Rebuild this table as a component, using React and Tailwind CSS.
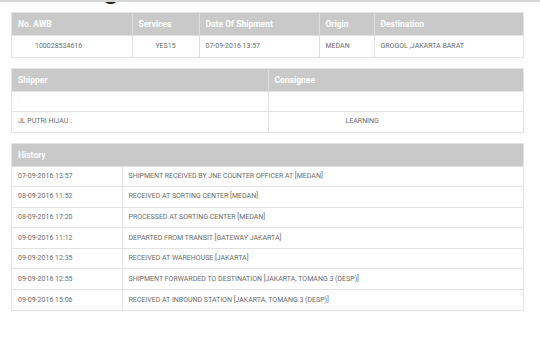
const HISTORY = [
  ['07-09-2016 13:57', 'SHIPMENT RECEIVED BY JNE COUNTER OFFICER AT [MEDAN]'],
  ['08-09-2016 11:52', 'RECEIVED AT SORTING CENTER [MEDAN]'],
  ['08-09-2016 17:20', 'PROCESSED AT SORTING CENTER [MEDAN]'],
  ['09-09-2016 11:12', 'DEPARTED FROM TRANSIT [GATEWAY JAKARTA]'],
  ['09-09-2016 12:35', 'RECEIVED AT WAREHOUSE [JAKARTA]'],
  ['09-09-2016 12:55', 'SHIPMENT FORWARDED TO DESTINATION [JAKARTA, TOMANG 3 (DESP)]'],
  ['09-09-2016 15:06', 'RECEIVED AT INBOUND STATION [JAKARTA, TOMANG 3 (DESP)]'],
];

const th = 'p-0 px-[6px] text-left align-middle font-bold leading-none text-white text-[8.5px] border-r border-[#dedede] last:border-r-0';
const td = 'p-0 px-[6px] align-middle leading-none text-[7px] text-[#6b6b6b] border-r border-t border-[#e2e2e2] last:border-r-0';

function Card({ children }) {
  return (
    <div className="w-[511px] outline outline-1 outline-[#e3e3e3] shadow-[0_1px_1px_rgba(0,0,0,0.05)]">
      {children}
    </div>
  );
}

export default function App() {
  return (
    <div className="w-[540px] h-[342px] bg-white overflow-hidden" style={{ fontFamily: 'Roboto, "Liberation Sans", sans-serif' }}>
      <div className="h-[5px] overflow-hidden border-t-2 border-[#d6d6d6]">
        <h1
          className="ml-3 -mt-[25px] text-[26px] leading-none font-bold text-[#222] whitespace-nowrap"
          style={{ fontFamily: '"Liberation Sans", Arial, sans-serif' }}
        >
          Tracking
        </h1>
      </div>

      <div className="ml-3 mt-2 flex flex-col gap-3">
        <Card>
          <table className="w-full border-collapse table-fixed">
            <colgroup>
              <col className="w-[120px]" />
              <col className="w-[67px]" />
              <col className="w-[120px]" />
              <col className="w-[55px]" />
              <col />
            </colgroup>
            <thead>
              <tr className="bg-[#c9c9c9] h-[22px]">
                <th className={th}>No. AWB</th>
                <th className={`${th} text-center`}>Services</th>
                <th className={th}>Date Of Shipment</th>
                <th className={th}>Origin</th>
                <th className={th}>Destination</th>
              </tr>
            </thead>
            <tbody>
              <tr className="h-[22px]">
                <td className={`${td} pl-[23px]`}>100028534616</td>
                <td className={`${td} text-center`}>YES15</td>
                <td className={td}>07-09-2016 13:57</td>
                <td className={td}>MEDAN</td>
                <td className={td}>GROGOL ,JAKARTA BARAT</td>
              </tr>
            </tbody>
          </table>
        </Card>

        <Card>
          <table className="w-full border-collapse table-fixed">
            <colgroup>
              <col className="w-[256px]" />
              <col />
            </colgroup>
            <thead>
              <tr className="bg-[#c9c9c9] h-[22px]">
                <th className={th}>Shipper</th>
                <th className={th}>Consignee</th>
              </tr>
            </thead>
            <tbody>
              <tr className="h-[20px]">
                <td className={`${td} text-[#e4e4e4]`}>:</td>
                <td className={td}></td>
              </tr>
              <tr className="h-[21px]">
                <td className={td}>JL PUTRI HIJAU :</td>
                <td className={`${td} pl-[77px]`}>LEARNING</td>
              </tr>
            </tbody>
          </table>
        </Card>

        <Card>
          <table className="w-full border-collapse table-fixed">
            <colgroup>
              <col className="w-[110px]" />
              <col />
            </colgroup>
            <thead>
              <tr className="bg-[#c9c9c9] h-[22px]">
                <th className={th} colSpan={2}>History</th>
              </tr>
            </thead>
            <tbody>
              {HISTORY.map(([date, desc]) => (
                <tr key={date + desc} className="h-[20.6px]">
                  <td className={td}>{date}</td>
                  <td className={td}>{desc}</td>
                </tr>
              ))}
            </tbody>
          </table>
        </Card>
      </div>
    </div>
  );
}
